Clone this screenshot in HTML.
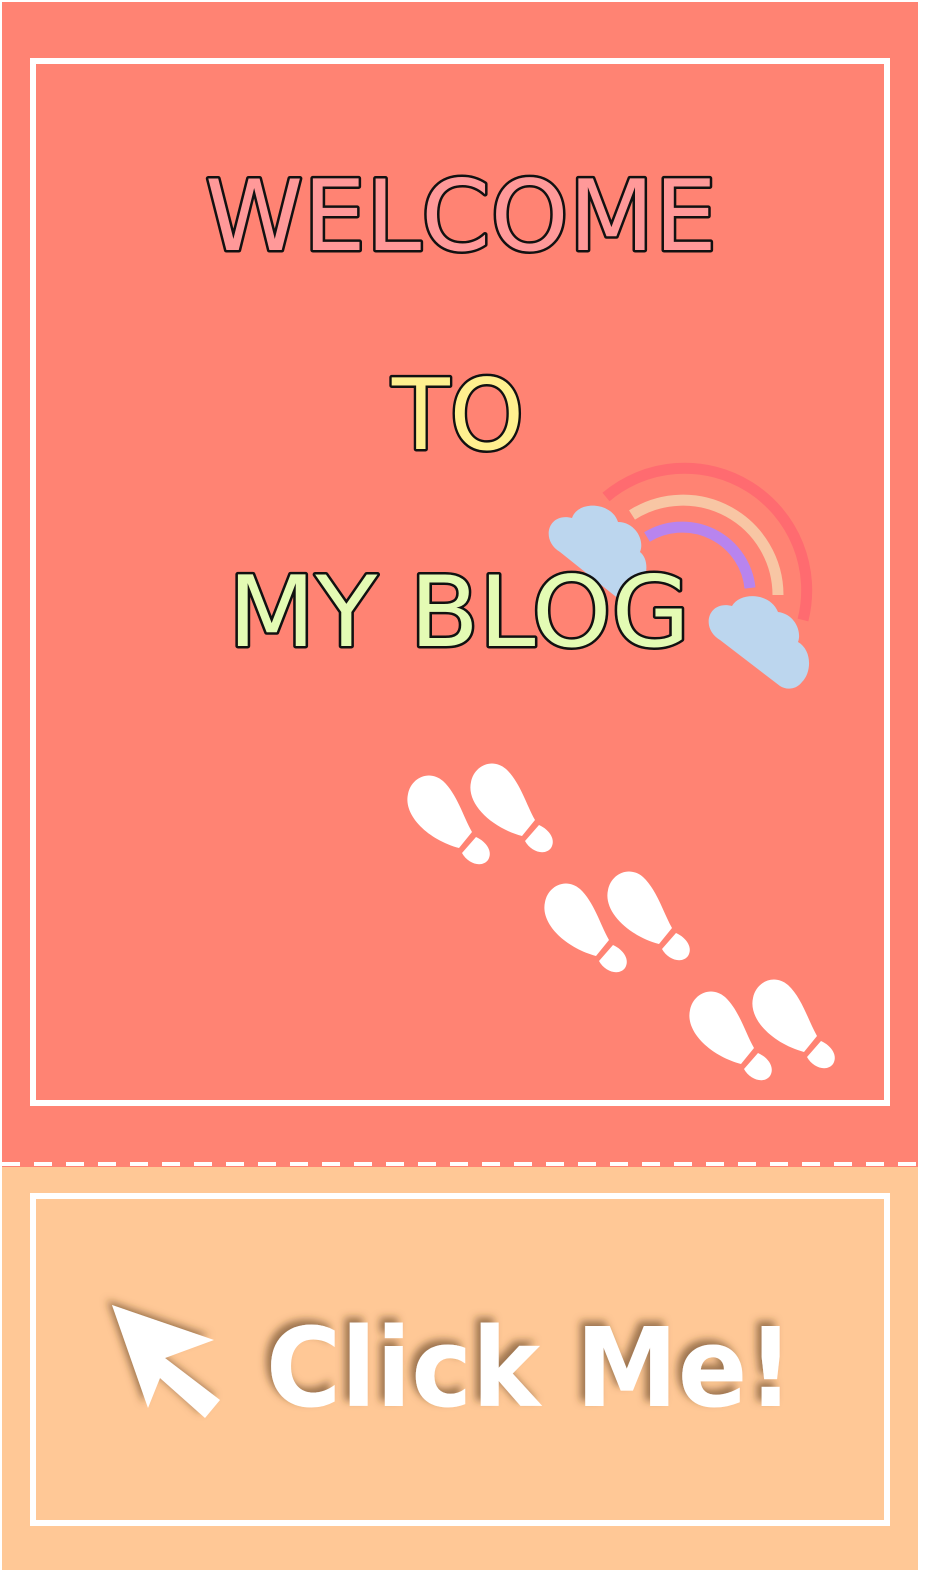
<!DOCTYPE html>
<html><head><meta charset="utf-8"><style>
html,body{margin:0;padding:0;background:#fff;}
body{width:925px;height:1572px;overflow:hidden;position:relative;}
</style></head><body>
<svg width="925" height="1572" viewBox="0 0 925 1572" style="position:absolute;left:0;top:0">
<defs>
<filter id="ds" x="-20%" y="-20%" width="140%" height="140%">
<feDropShadow dx="-5" dy="-5" stdDeviation="4" flood-color="#5a3a1a" flood-opacity="0.6"/>
</filter>
<g id="fp">
<path d="M3 22 C-2 44 24 68 54 76 L67 60 C58 44 52 22 38 9 C24 -3 6 6 3 22Z" fill="#fff"/>
<path d="M71 65 L57 81 C63 92 77 96 83 88 C88 80 82 70 71 65Z" fill="#fff"/>
</g>
<g id="pair">
<use href="#fp" x="0" y="12"/>
<use href="#fp" x="63" y="0"/>
</g>
</defs>
<rect x="2" y="2" width="916" height="1165" fill="#ff8373"/>
<rect x="2" y="1167" width="916" height="403" fill="#ffc896"/>
<line x1="2" y1="1164" x2="918" y2="1164" stroke="#fff" stroke-width="4" stroke-dasharray="18 14"/>
<rect x="33" y="61" width="854" height="1042" fill="none" stroke="#fff" stroke-width="6"/>
<rect x="33" y="1196" width="854" height="327" fill="none" stroke="#fff" stroke-width="6"/>
<g fill="none" stroke-width="11">
<path d="M606 497 A122 122 0 0 1 803 620" stroke="#ff6b70"/>
<path d="M632 515 A95 95 0 0 1 778 595" stroke="#f8c6a4"/>
<path d="M647 537 A68 68 0 0 1 750 588" stroke="#b884ee"/>
</g>
<g fill="#bcd6ee">
<path d="M560 552 C540 540 548 512 572 518 C578 500 612 502 618 522 C635 522 645 540 640 552 C650 560 648 580 636 590 L620 600 Z"/>
<path d="M720 640 C700 628 708 600 732 606 C740 592 770 592 778 612 C795 614 802 632 798 642 C812 650 812 672 802 682 C796 690 786 690 780 686 Z"/>
</g>
<g font-family="'DejaVu Sans','Liberation Sans',sans-serif" stroke="#111" stroke-width="5" stroke-linejoin="round" paint-order="stroke">
<text x="205" y="250" font-size="98" textLength="512" lengthAdjust="spacingAndGlyphs" fill="#ff9999">WELCOME</text>
<text x="392" y="449" font-size="98" textLength="132" lengthAdjust="spacingAndGlyphs" fill="#fff08f">TO</text>
<text x="228" y="646" font-size="98" textLength="462" lengthAdjust="spacingAndGlyphs" fill="#e4fbb4">MY BLOG</text>
</g>
<use href="#pair" x="405" y="760"/>
<use href="#pair" x="542" y="868"/>
<use href="#pair" x="687" y="976"/>
<g filter="url(#ds)" fill="#fff">
<path d="M112 1305 L214 1340 L165 1358 L220 1400 L205 1418 L160 1378 L148 1408 Z"/>
<text x="266" y="1406" font-family="'DejaVu Sans','Liberation Sans',sans-serif" font-weight="bold" font-size="110" textLength="528" lengthAdjust="spacingAndGlyphs">Click Me!</text>
</g>
</svg>
</body></html>
